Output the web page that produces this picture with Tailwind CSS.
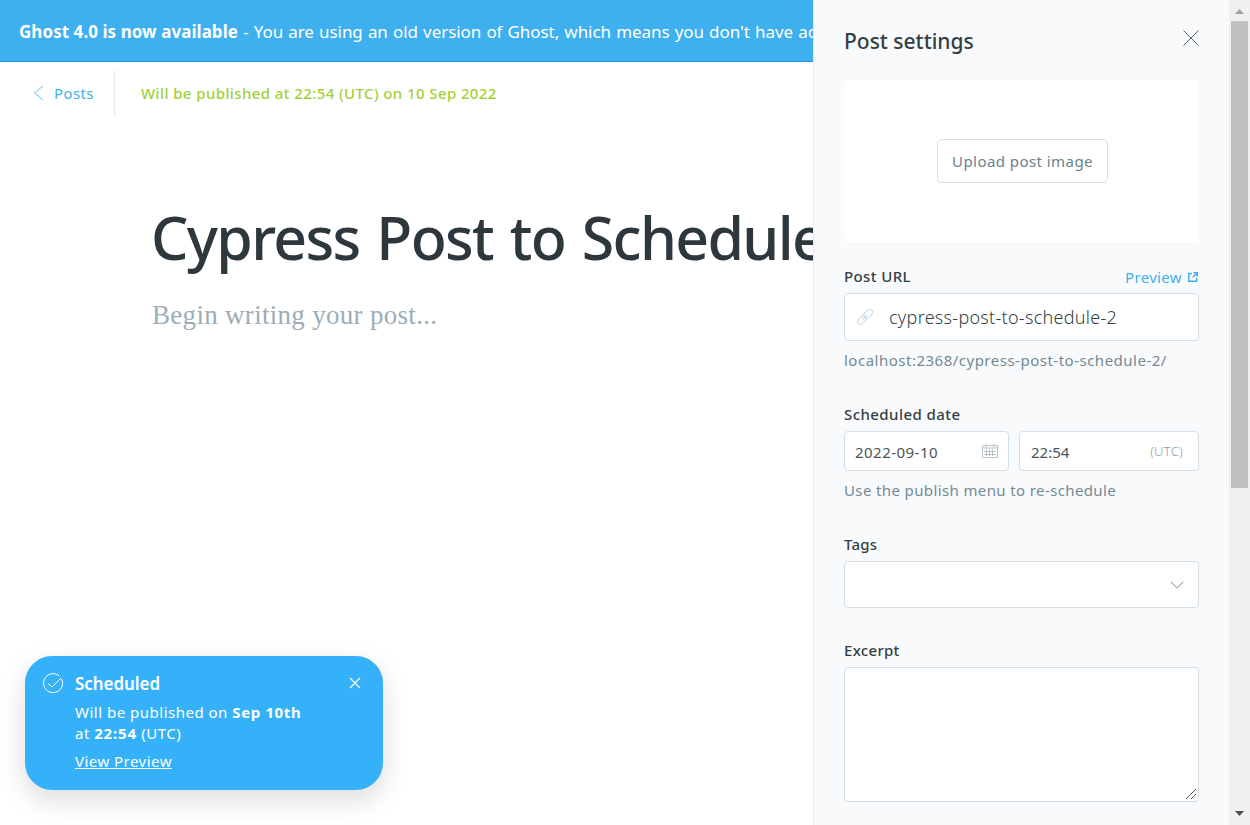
<!DOCTYPE html>
<html lang="en">
<head>
<meta charset="utf-8">
<title>Post settings</title>
<script src="https://cdn.jsdelivr.net/npm/@tailwindcss/browser@4"></script>
</head>
<body class="h-[825px] w-[1250px] overflow-hidden bg-white font-['Noto_Sans',sans-serif]">
<div class="relative flex h-full">
  <main class="h-full w-[813px] shrink-0 overflow-hidden">
    <div class="flex h-[62px] items-center border-b border-[#1e94e0] bg-[#3eb0ef] pt-[2px] pl-[19px] text-[17px] whitespace-pre text-white"><b class="tracking-[0.05px]">Ghost 4.0 is now available</b><span class="tracking-[-0.06px] [word-spacing:0.8px]"> - You are using an old version of Ghost, which means you don't have access</span></div>
    <header class="flex h-[62px] items-center text-[15px]">
      <a class="flex h-[46px] w-[115px] items-center border-r border-[#e3ebf1] pl-[33px] text-[#3eb0ef]">
        <svg class="mr-[10px] h-4 w-[11px]" viewBox="0 0 11 16" fill="none" stroke="currentColor" stroke-width=".8"><path d="M10 1 1.500 8l8.500 7"/></svg>
        <span class="tracking-[0.4px]">Posts</span>
      </a>
      <span class="ml-[26px] font-medium tracking-[0.4px] text-[#a4d037]">Will be published at 22:54 (UTC) on 10 Sep 2022</span>
    </header>
    <section class="pt-[73px] pl-[151px]">
      <h1 class="h-[80px] text-[59px] leading-[80px] font-[550] tracking-[-1.65px] [word-spacing:3px] whitespace-nowrap text-[#2e373b]">Cypress Post to Schedule</h1>
      <p class="mt-[22px] ml-px font-['Liberation_Serif',serif] text-[27px] leading-[32px] tracking-[0.3px] text-[#9baeb8]">Begin writing your post...</p>
    </section>
  </main>
  <aside class="flex h-full w-[416px] shrink-0 flex-col overflow-hidden border-l border-[#e3ebf1] bg-[#f9fafc] px-[30px] text-[15px] text-[#343f44]">
    <div class="flex h-20 shrink-0 items-center justify-between">
      <h2 class="mt-1 text-[21px] font-medium">Post settings</h2>
      <svg class="-mt-1 h-4 w-4" viewBox="0 0 16 16" fill="none" stroke="#343f44" stroke-width=".8"><path d="m.5.5 15 15m0-15-15 15"/></svg>
    </div>
    <div class="flex h-[162px] shrink-0 items-center justify-center rounded-[5px] bg-white pl-[2px]">
      <button class="h-11 w-[171px] rounded-[5px] border border-[#d2dfe5] tracking-[0.44px] text-[#69828d]">Upload post image</button>
    </div>
    <div class="mt-[25px] flex h-[26px] shrink-0 items-start justify-between leading-5">
      <label class="-mt-px font-[550] tracking-[0.4px]">Post URL</label>
      <a class="flex items-center pr-px text-[#3eb0ef]"><span class="tracking-[0.35px]">Preview</span>
        <svg class="ml-[6px] h-[10px] w-[10px]" viewBox="0 0 10 10" fill="none" stroke="currentColor" stroke-width="1.500"><path d="M4 1.500H.8v7.700h7.900V6M5.500.8h3.700v3.700M9 1 4.700 5.300"/></svg></a>
    </div>
    <div class="flex h-12 shrink-0 items-center rounded-[4px] border border-[#d2dfe9] bg-white pl-3 text-[18px]">
      <svg class="mr-4 h-4 w-4" viewBox="0 0 16 16" fill="none" stroke="#c9dae4" stroke-width="1"><g transform="rotate(-45 8 8)"><rect x="-1.500" y="5" width="10" height="6" rx="3"/><rect x="7.500" y="5" width="10" height="6" rx="3"/><path d="M4.500 8h7"/></g></svg>
      <span class="font-light tracking-[0.28px]">cypress-post-to-schedule-2</span>
    </div>
    <p class="mt-[9px] h-5 shrink-0 leading-5 tracking-[0.5px] text-[#738a94]">localhost:2368/cypress-post-to-schedule-2/</p>
    <label class="mt-[34px] h-[27px] shrink-0 leading-5 font-[550] tracking-[0.43px]">Scheduled date</label>
    <div class="flex h-10 shrink-0 gap-[10px]">
      <div class="flex w-[165px] items-center justify-between rounded-[4px] border border-[#d2dfe9] bg-white px-[10px]"><span class="pt-[2px] tracking-[0.47px] text-[#4b565b]">2022-09-10</span>
        <svg class="h-4 w-4" viewBox="0 0 16 16" fill="none" stroke="#a5b5bd" stroke-width=".8"><path d="M.5 2.500V14.500h15V2.500H13M.5 2.500H3M5 2.500h6M.5 5h15M3 2.500a1 1 0 1 1 2 0a1 1 0 1 1-2 0M11 2.500a1 1 0 1 1 2 0a1 1 0 1 1-2 0M4.500 6.500v6.500M7.500 6.500v6.500M10.500 6.500v6.500M2 8.500h12M2 11.500h12"/></svg>
      </div>
      <div class="flex flex-1 items-center justify-between rounded-[4px] border border-[#d2dfe9] bg-white pr-[15px] pl-[11px]"><span class="pt-[2px] text-[#4b565b]">22:54</span><span class="pt-[2px] text-[13px] font-light tracking-[0.3px] text-[#8c9fa9]">(UTC)</span></div>
    </div>
    <p class="mt-[9px] h-5 shrink-0 leading-5 tracking-[0.38px] text-[#738a94]">Use the publish menu to re-schedule</p>
    <label class="mt-[34px] h-[27px] shrink-0 leading-5 font-[550] tracking-[0.2px]">Tags</label>
    <div class="flex h-[47px] shrink-0 items-center justify-end rounded-[4px] border border-[#d2dfe9] bg-white pr-[14px]">
      <svg class="h-2 w-[14px]" viewBox="0 0 14 8" fill="none" stroke="#a3b5bf" stroke-width="1.200"><path d="m.7.7 6.300 6.200L13.300.7"/></svg>
    </div>
    <label class="mt-[32px] h-[27px] shrink-0 leading-5 font-[550] tracking-[0.3px]">Excerpt</label>
    <div class="flex h-[135px] shrink-0 items-end justify-end rounded-[4px] border border-[#d2dfe9] bg-white p-[2px]">
      <svg class="h-[10px] w-[10px]" viewBox="0 0 10 10" stroke="#555" stroke-width="1"><path d="M0 10 10 0M5 10l5-5"/></svg>
    </div>
  </aside>
  <div class="flex w-[21px] shrink-0 flex-col items-center bg-[#f0f0f0]">
    <div class="flex h-[21px] items-center"><svg class="mt-[2px] h-[5px] w-[9px]" viewBox="0 0 9 5"><path d="M0 5 4.500 0 9 5z" fill="#a3a3a3"/></svg></div>
    <div class="h-[467px] w-[17px] bg-[#c1c1c1]"></div>
    <svg class="mt-auto mb-[9px] h-[5px] w-[9px]" viewBox="0 0 9 5"><path d="M0 0h9L4.500 5z" fill="#505050"/></svg>
  </div>
  <div class="absolute top-[656px] left-[25px] flex h-[134px] w-[358px] rounded-[27px] bg-[#35b1f9] pt-[17px] pl-[18px] text-[15px] text-white shadow-[0_10px_28px_rgba(0,0,0,0.14)]">
    <svg class="mr-3 h-5 w-5" viewBox="0 0 20 20" fill="none" stroke="currentColor"><path d="M18.600 6A9.500 9.500 0 1 1 16.300 3M5 10.500l4 3.500L18 5"/></svg>
    <div class="leading-[21px]">
      <h3 class="h-[29px] text-[17px] font-semibold tracking-[-0.06px]">Scheduled</h3>
      <p class="tracking-[0.5px]">Will be published on <b class="tracking-[0.62px]">Sep 10th</b></p>
      <p class="tracking-[0.5px]">at <b class="tracking-[0.8px]">22:54</b> (UTC)</p>
      <a class="mt-[7px] block tracking-[0.47px] underline">View Preview</a>
    </div>
    <svg class="absolute top-[21px] right-[22px] h-3 w-3" viewBox="0 0 12 12" fill="none" stroke="currentColor" stroke-width="1.200"><path d="m1 1 10 10m0-10L1 11"/></svg>
  </div>
</div>
</body>
</html>
